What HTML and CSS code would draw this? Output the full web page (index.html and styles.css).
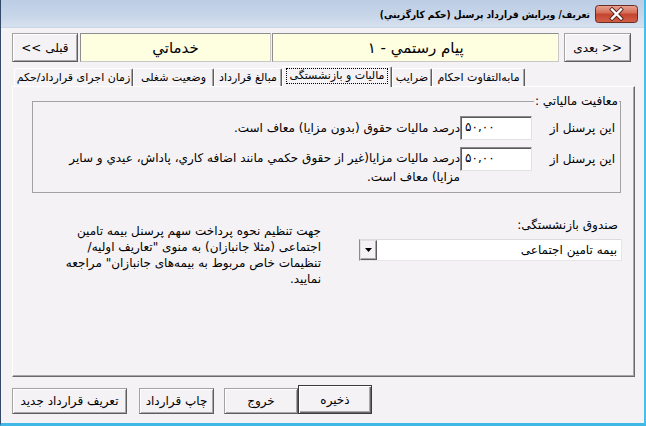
FILE: index.html
```html
<!DOCTYPE html>
<html lang="fa" dir="rtl">
<head>
<meta charset="utf-8">
<title>تعریف/ ویرایش قرارداد پرسنل</title>
<link rel="stylesheet" href="styles.css">
</head>
<body>
<div class="window">
  <div class="titlebar">
    <div class="close">
      <svg width="43" height="18" viewBox="0 0 43 18">
        <defs>
          <linearGradient id="cg" x1="0" y1="0" x2="0" y2="1">
            <stop offset="0" stop-color="#e8a493"/>
            <stop offset="0.45" stop-color="#d46c55"/>
            <stop offset="0.5" stop-color="#c4432c"/>
            <stop offset="1" stop-color="#d2614a"/>
          </linearGradient>
        </defs>
        <rect x="0.5" y="0.5" width="42" height="17" rx="3" fill="url(#cg)" stroke="#6b2a22"/>
        <path d="M17 4.5 L26 13.5 M26 4.5 L17 13.5" stroke="#4a1a14" stroke-width="4" stroke-linecap="square"/>
        <path d="M17 4.5 L26 13.5 M26 4.5 L17 13.5" stroke="#ffffff" stroke-width="2.4" stroke-linecap="square"/>
      </svg>
    </div>
    <div class="title">تعریف/ ویرایش قرارداد پرسنل (حکم کارگزيني)</div>
  </div>

  <div class="client">
    <div class="navrow">
      <div class="btn navbtn next">&lt;&lt; بعدی</div>
      <div class="info name">پیام رستمي - ۱</div>
      <div class="info kind">خدماتي</div>
      <div class="btn navbtn prev">قبلی &gt;&gt;</div>
    </div>

    <div class="tabs">
      <div class="tab t1"><span class="tl">زمان اجرای قرارداد/حکم</span></div>
      <div class="tab t2"><span class="tl">وضعیت شغلی</span></div>
      <div class="tab t3"><span class="tl">مبالغ قرارداد</span></div>
      <div class="tab t4 active"><span class="tl focus">مالیات و بازنشستگی</span></div>
      <div class="tab t5"><span class="tl">ضرایب</span></div>
      <div class="tab t6"><span class="tl">مابه‌التفاوت احکام</span></div>
    </div>

    <div class="panel">
      <fieldset class="group">
        <legend>معافیت مالیاتي :</legend>
        <div class="row r1">
          <div class="rlabel">این پرسنل از</div>
          <div class="num">۵۰,۰۰</div>
          <div class="rtext">درصد مالیات حقوق (بدون مزایا) معاف است.</div>
        </div>
        <div class="row r2">
          <div class="rlabel">این پرسنل از</div>
          <div class="num">۵۰,۰۰</div>
          <div class="rtext multi">درصد مالیات مزایا(غیر از حقوق حکمي مانند اضافه کاري، پاداش، عیدي و سایر<br>مزایا) معاف است.</div>
        </div>
      </fieldset>

      <div class="lower">
        <div class="fund">
          <div class="fundlabel">صندوق بازنشستگی:</div>
          <div class="combo">
            <span class="combotext">بیمه تامین اجتماعی</span>
            <span class="dropbtn">
              <svg width="7" height="4" viewBox="0 0 7 4"><path d="M0 0 H7 L3.5 4 Z" fill="#000"/></svg>
            </span>
          </div>
        </div>
        <div class="note">جهت تنظیم نحوه پرداخت سهم پرسنل بیمه تامین<br>اجتماعی (مثلا جانبازان) به منوی "تعاریف اولیه/<br>تنظیمات خاص مربوط به بیمه‌های جانبازان" مراجعه<br>نمایید.</div>
      </div>
    </div>

    <div class="actions">
      <div class="btn act newc">تعریف قرارداد جدید</div>
      <div class="btn act printc">چاپ قرارداد</div>
      <div class="btn act exitc">خروج</div>
      <div class="btn act save">ذخیره</div>
    </div>
  </div>
</div>
</body>
</html>
```

FILE: styles.css
```css
* { box-sizing: border-box; }
html, body { margin: 0; padding: 0; }
body {
  width: 646px;
  height: 426px;
  overflow: hidden;
  font-family: "DejaVu Sans", "Noto Sans", sans-serif;
  font-size: 12px;
  color: #000;
  background: #f5f2f6;
}
.window {
  width: 646px;
  height: 426px;
  display: flex;
  flex-direction: column;
  border-left: 1px solid #34486a;
  border-right: 2px solid #45bfe9;
  border-bottom: 3px solid #3fb8e6;
  background: #f5f2f6;
}
.titlebar {
  height: 28px;
  flex: 0 0 28px;
  display: flex;
  align-items: flex-start;
  background: linear-gradient(#bccde4, #c8d6e9 60%, #d7e1ee);
  border-bottom: 1px solid #c9d5e5;
}
.close {
  width: 43px;
  height: 18px;
  margin: 5px 6px 0 0;
  line-height: 0;
}
.title {
  margin: 8px 5px 0 0;
  font-family: "DejaVu Sans Condensed", "DejaVu Sans", sans-serif;
  font-stretch: condensed;
  font-weight: bold;
  font-size: 10px;
  line-height: 14px;
  white-space: nowrap;
}
.client {
  flex: 1;
  display: flex;
  flex-direction: column;
  padding: 5px 9px 0 11px;
}
.btn {
  display: flex;
  align-items: center;
  justify-content: center;
  background: #f5f2f6;
  border: 1px solid #a3a3a3;
  border-right-color: #5d5d5d;
  border-bottom-color: #5d5d5d;
  box-shadow: inset 1px 1px #ffffff, inset -1px -1px #a8a8a8;
  white-space: nowrap;
}
.navrow {
  display: flex;
  height: 29px;
  flex: 0 0 29px;
  margin-right: 4px;
}
.navbtn {
  height: 29px;
  font-size: 12px;
}
.next { width: 67px; }
.prev { width: 66px; margin-right: 2px; }
.info {
  height: 29px;
  display: flex;
  align-items: center;
  justify-content: center;
  background: #fefee1;
  border: 1px solid #8e8e8e;
  border-right-color: #c8c8c8;
  border-bottom-color: #c8c8c8;
  font-size: 15px;
}
.name { width: 288px; margin-right: 5px; }
.kind { width: 192px; margin-right: 1px; }

.tabs {
  direction: ltr;
  display: flex;
  align-items: flex-end;
  height: 20px;
  flex: 0 0 20px;
  margin-top: 4px;
  padding-left: 2px;
}
.tab {
  height: 18px;
  display: flex;
  align-items: center;
  justify-content: center;
  background: #f5f2f6;
  border-top: 1px solid #ffffff;
  border-left: 1px solid #ffffff;
  border-right: 1px solid #5e5e5e;
  box-shadow: inset -1px 0 #a8a8a8;
  border-radius: 2px 2px 0 0;
  font-size: 11px;
  white-space: nowrap;
}
.tl {
  direction: rtl;
  unicode-bidi: isolate;
}
.t1 { width: 119px; }
.t2 { width: 81px; }
.t3 { width: 68px; }
.t4 { width: 110px; }
.t5 { width: 40px; }
.t6 { width: 93px; }
.tab.active {
  height: 21px;
  position: relative;
  z-index: 2;
  margin-bottom: -1px;
  padding-bottom: 3px;
}
.focus {
  outline: 1px dotted #000;
  outline-offset: 0;
  padding: 0 3px;
  line-height: 14px;
}
.panel {
  flex: 0 0 291px;
  height: 291px;
  display: flex;
  flex-direction: column;
  border: 1px solid #ffffff;
  border-right-color: #6a6a6a;
  border-bottom-color: #6a6a6a;
  box-shadow: inset -1px -1px #a8a8a8;
  background: #f5f2f6;
}
.group {
  margin: 7px 13px 0 19px;
  padding: 0 5px 5px 5px;
  border: 1px solid #a2a2a2;
  min-width: 0;
}
.group legend {
  padding: 0 1px;
  margin-right: -4px;
  line-height: 14px;
  font-size: 12px;
}
.row {
  display: flex;
  align-items: flex-start;
}
.r1 { margin-top: 8px; }
.r2 { margin-top: 7px; }
.rlabel {
  width: 78px;
  height: 24px;
  line-height: 24px;
  white-space: nowrap;
}
.num {
  width: 72px;
  height: 24px;
  margin-right: 5px;
  direction: ltr;
  background: #ffffff;
  border: 1px solid #8a8a8a;
  border-right-color: #e2e2e2;
  border-bottom-color: #e2e2e2;
  box-shadow: inset 1px 1px #5a5a5a;
  text-align: left;
  padding: 3px 0 0 4px;
  font-size: 12px;
  line-height: 14px;
}
.rtext {
  white-space: nowrap;
  line-height: 24px;
}
.rtext.multi {
  line-height: 19px;
  padding-top: 2px;
}
.lower {
  display: flex;
  margin: 24px 12px 0 0;
}
.fund { width: 263px; }
.fundlabel {
  line-height: 16px;
  white-space: nowrap;
  padding-right: 4px;
}
.combo {
  margin-top: 6px;
  height: 22px;
  display: flex;
  align-items: center;
  background: #ffffff;
  border: 1px solid #8a8a8a;
  border-top-color: #dcdcdc;
  border-right-color: #e6e6e6;
  border-bottom-color: #e6e6e6;
}
.combotext {
  flex: 1;
  padding-right: 4px;
  white-space: nowrap;
}
.dropbtn {
  width: 17px;
  height: 20px;
  display: flex;
  align-items: center;
  justify-content: center;
  background: #f5f2f6;
  border: 1px solid #e0e0e0;
  border-right-color: #5d5d5d;
  border-bottom-color: #5d5d5d;
  box-shadow: inset -1px -1px #a8a8a8;
}
.note {
  margin: 6px 38px 0 0;
  line-height: 16px;
  white-space: nowrap;
}
.actions {
  direction: ltr;
  display: flex;
  align-items: flex-end;
  margin-top: 8px;
  height: 29px;
}
.act { height: 26px; font-size: 12px; }
.newc { width: 115px; }
.printc { width: 75px; margin-left: 12px; }
.exitc { width: 74px; margin-left: 10px; }
.save {
  width: 74px;
  height: 29px;
  border: 1px solid #3a3a3a;
  box-shadow: inset 1px 1px #ffffff, inset -1px -1px #6a6a6a, inset -2px -2px #a8a8a8;
}
```
